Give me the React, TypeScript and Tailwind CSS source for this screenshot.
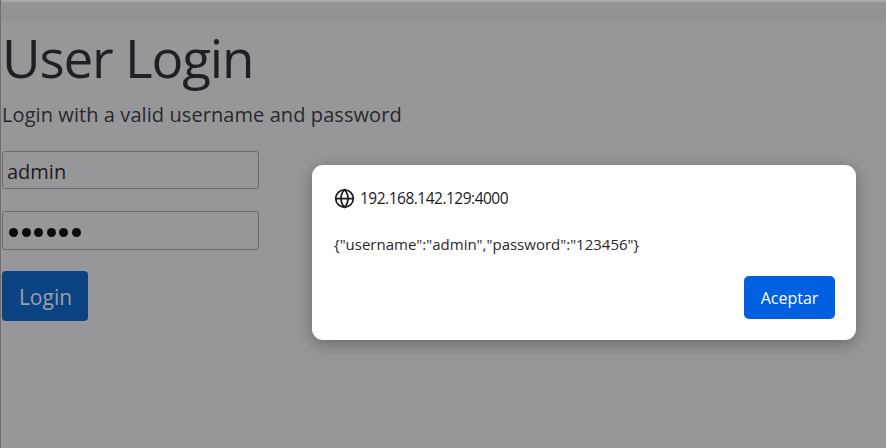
import { Globe } from "lucide-react";

function App() {
  return (
    <div className="relative w-[886px] h-[448px] overflow-hidden bg-[#979799] border-l border-[#6f6f70] font-['Open_Sans','Noto_Sans',sans-serif]">
      <div className="h-[22px] border-t-2 border-[#a9a9aa] bg-[#939395]"></div>
      <div className="h-[426px] pl-[1px]">
        <h1 className="text-[53px] leading-[58px] mt-[7px] text-[#1f2025] tracking-[-1.2px]">
          User Login
        </h1>
        <p className="text-[20px] leading-[28px] mt-[14px] text-[#27282c] tracking-[0.08px]">
          Login with a valid username and password
        </p>
        <div className="w-[257px] h-[38px] mt-[22px] flex items-center px-[4px] pt-[3px] border border-[#6c6c70] rounded-[3px] text-[20px] text-[#1c1d20]">
          admin
        </div>
        <div className="w-[257px] h-[39px] mt-[22px] flex items-center gap-[3.6px] px-[6px] pt-[4px] border border-[#6c6c70] rounded-[3px]">
          {[0, 1, 2, 3, 4, 5].map((i) => (
            <span key={i} className="w-[9px] h-[9px] rounded-full bg-[#0c0c0e]"></span>
          ))}
        </div>
        <button className="w-[86px] h-[50px] mt-[21px] pt-[4px] pl-[1px] rounded-[4px] bg-[#0b4382] text-[21px] text-[#9a9ea6]">
          Login
        </button>
      </div>
      <div className="absolute left-[311px] top-[165px] w-[544px] h-[175px] bg-white rounded-[11px] shadow-[0_4px_16px_rgba(0,0,0,0.3)] px-[22px] pt-[22px] text-[#1b1b1b]">
        <div className="flex items-center gap-[5px] text-[15.5px] leading-[22px] tracking-[-0.5px]">
          <Globe size={21} strokeWidth={2} />
          192.168.142.129:4000
        </div>
        <div className="mt-[25px] text-[15px] leading-[20px] text-[#2a2a2a]">
          {'{"username":"admin","password":"123456"}'}
        </div>
        <div className="flex justify-end mt-[22px] mr-[-1px]">
          <button className="w-[91px] h-[43px] rounded-[5px] bg-[#0060df] text-white text-[16px] font-medium">
            Aceptar
          </button>
        </div>
      </div>
    </div>
  );
}

export default App;
